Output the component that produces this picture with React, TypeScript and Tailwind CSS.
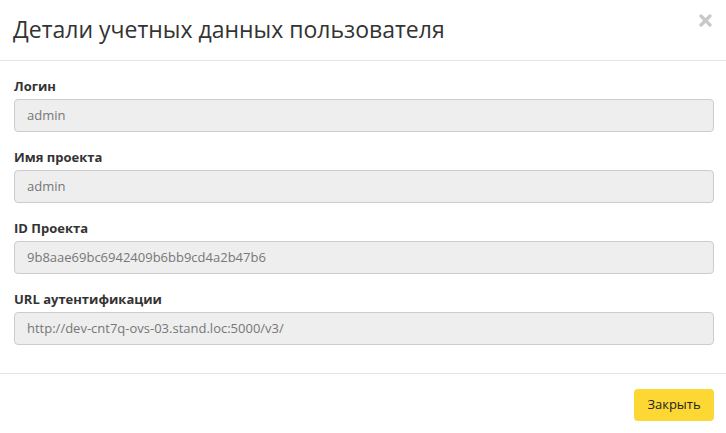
import React from "react";

const fields = [
  { label: "Логин", value: "admin" },
  { label: "Имя проекта", value: "admin" },
  { label: "ID Проекта", value: "9b8aae69bc6942409b6bb9cd4a2b47b6" },
  { label: "URL аутентификации", value: "http://dev-cnt7q-ovs-03.stand.loc:5000/v3/" },
];

export default function App() {
  return (
    <div
      className="w-[726px] h-[433px] bg-white text-[#333] overflow-hidden"
      style={{ fontFamily: '"Open Sans", "Noto Sans", sans-serif' }}
    >
      <div className="relative h-[61px] border-b border-[#e5e5e5] pl-[13px] pt-[14px]">
        <h4 className="text-[23px] leading-[30px] font-normal text-[#333] m-0">
          Детали учетных данных пользователя
        </h4>
        <button className="absolute left-[699px] top-[14px] w-[13px] h-[13px]" aria-label="close">
          <svg width="13" height="13" viewBox="0 0 13 13">
            <path d="M2 2 L11 11 M11 2 L2 11" stroke="#c8c8c8" strokeWidth="3.2" strokeLinecap="round" />
          </svg>
        </button>
      </div>
      <div className="pl-[14px] pr-[12px] pt-[16px] pb-[28px] flex flex-col gap-[16px]">
        {fields.map((f) => (
          <div key={f.label} className="flex flex-col">
            <label className="text-[13px] font-bold leading-[18px] mb-[4px] text-[#333]">
              {f.label}
            </label>
            <div className="h-[33px] rounded-[4px] border border-[#ccc] bg-[#eee] px-[12px] flex items-center text-[13px] text-[#777]">
              {f.value}
            </div>
          </div>
        ))}
      </div>
      <div className="border-t border-[#e5e5e5] pt-[15px] pr-[12px] flex justify-end">
        <button className="h-[32px] w-[80px] rounded-[4px] bg-[#fdd835] text-[13px] text-[#222] flex items-center justify-center">
          Закрыть
        </button>
      </div>
    </div>
  );
}
